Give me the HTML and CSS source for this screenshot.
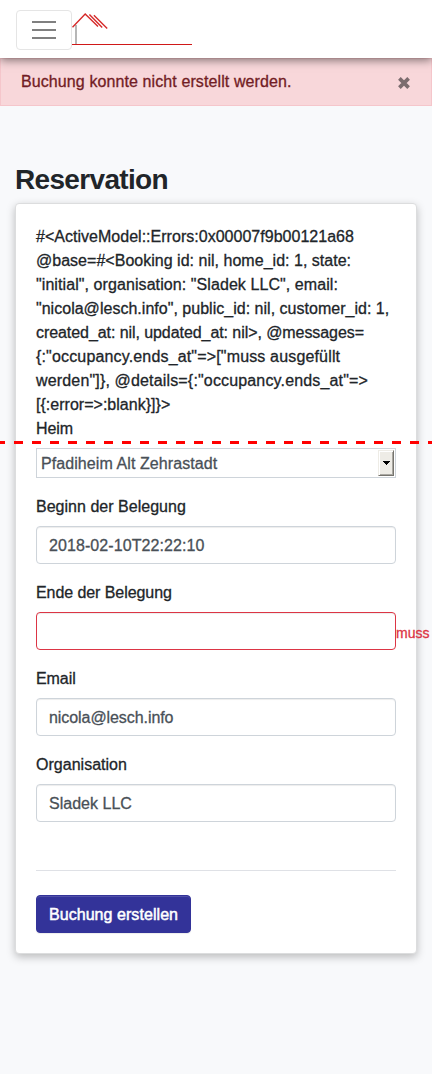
FILE: index.html
```html
<!DOCTYPE html>
<html lang="de">
<head>
<meta charset="utf-8">
<title>Reservation</title>
<link rel="stylesheet" href="styles.css">
</head>
<body>
<header class="navbar">
  <button class="toggler" type="button" aria-label="Navigation">
    <svg width="24" height="19" viewBox="0 0 24 19"><path d="M0 1h24M0 9h24M0 17h24" stroke="#808080" stroke-width="2"/></svg>
  </button>
  <svg class="logo" width="120" height="36" viewBox="0 0 120 36" fill="none">
    <path d="M4 15V34" stroke="#aaa" stroke-width="1.7"/>
    <path d="M.5 17.2L13.2 4L26 16.5M17.4 4.4L30.2 17.6M21.9 5.2L35.2 18.6" stroke="#d62b2b" stroke-width="1.4"/>
    <rect x="0" y="34" width="120" height="1" fill="#d01818"/>
  </svg>
</header>
<div class="alert">
  <span class="alert-text">Buchung konnte nicht erstellt werden.</span>
  <button class="close" type="button" aria-label="Schliessen">
    <svg width="14" height="14" viewBox="0 0 14 14"><path d="M2.4 2.4L11.6 11.6M11.6 2.4L2.4 11.6" stroke="#7b6c6e" stroke-width="3.7"/></svg>
  </button>
</div>
<main>
  <h1>Reservation</h1>
  <form class="card">
    <div class="dump">#&lt;ActiveModel::Errors:0x00007f9b00121a68<br>@base=#&lt;Booking id: nil, home_id: 1, state:<br><span class="wide">"initial", organisation: "Sladek LLC", email:</span><br>"nicola@lesch.info", public_id: nil, customer_id: 1,<br><span class="tight">created_at: nil, updated_at: nil&gt;, @messages=</span><br><span class="wider">{:"occupancy.ends_at"=&gt;["muss ausgefüllt</span><br><span class="wider">werden"]}, @details={:"occupancy.ends_at"=&gt;</span><br>[{:error=&gt;:blank}]}&gt;</div>
    <div class="group">
      <label class="tight">Heim</label>
      <div class="select wide"><span class="select-text">Pfadiheim Alt Zehrastadt</span><span class="arrow"><svg width="7" height="4" viewBox="0 0 7 4" shape-rendering="crispEdges"><path d="M0 0H7V1H6V2H5V3H4V4H3V3H2V2H1V1H0Z"/></svg></span></div>
    </div>
    <div class="group">
      <label>Beginn der Belegung</label>
      <div class="field wide">2018-02-10T22:22:10</div>
    </div>
    <div class="group">
      <label class="tight">Ende der Belegung</label>
      <div class="row"><div class="field invalid"></div><span class="feedback">muss</span></div>
    </div>
    <div class="group">
      <label class="tight">Email</label>
      <div class="field tight">nicola@lesch.info</div>
    </div>
    <div class="group">
      <label>Organisation</label>
      <div class="field">Sladek LLC</div>
    </div>
    <hr>
    <button class="submit" type="button">Buchung erstellen</button>
  </form>
</main>
<div class="fold"></div>
</body>
</html>
```
FILE: styles.css
```css
* { box-sizing: border-box; }
body {
  margin: 0;
  min-height: 1074px;
  position: relative;
  overflow: hidden;
  background: #f8f9fb;
  color: #212529;
  font: 16px/24px "Liberation Sans", Arial, sans-serif;
  letter-spacing: 0.02px;
  -webkit-text-stroke: 0.3px;
}
.navbar {
  position: relative;
  z-index: 1;
  display: flex;
  align-items: flex-start;
  height: 58px;
  padding: 10px 16px;
  background: #fff;
  box-shadow: 0 2px 9px rgba(0, 0, 0, .5);
}
.toggler {
  display: flex;
  align-items: center;
  justify-content: center;
  width: 56px;
  height: 40px;
  padding: 1px 0 0;
  border: 1px solid #e5e5e5;
  border-radius: 4px;
  background: transparent;
}
.logo { display: block; }
.alert {
  display: flex;
  justify-content: space-between;
  height: 48px;
  padding: 11px 20px;
  border: 1px solid #f5c6cb;
  background: #f8d7da;
  color: #721c24;
}
.alert-text { letter-spacing: 0.1px; }
.close { display: flex; padding: 6px 0 0; border: 0; background: none; }
main { padding: 55px 15px 0; }
h1 {
  margin: 0;
  height: 42px;
  padding-top: 1px;
  font-size: 28px;
  line-height: 36px;
  font-weight: 700;
  letter-spacing: -0.67px;
  -webkit-text-stroke: 0;
}
.card {
  padding: 20px;
  border: 1px solid #dcddde;
  border-radius: 4px;
  background: #fff;
  box-shadow: 0 3px 8px rgba(0, 0, 0, .25);
}
.dump { height: 192px; padding-top: 1px; white-space: nowrap; }
.tight { letter-spacing: -0.07px; }
.wide { letter-spacing: 0.08px; }
.wider { letter-spacing: 0.16px; }
.group { margin-bottom: 16px; }
label { display: block; height: 24px; padding-top: 1px; margin-bottom: 8px; }
.select {
  display: flex;
  align-items: center;
  justify-content: space-between;
  height: 30px;
  padding: 1px 1px 1px 4px;
  border: 1px solid #ced4da;
  color: #495057;
}
.select-text { padding-top: 2px; }
.arrow {
  display: flex;
  align-items: center;
  justify-content: center;
  width: 16px;
  height: 26px;
  background: #eeece6;
  border: 1px solid #eeece6;
  border-right-color: #76746e;
  border-bottom-color: #76746e;
  box-shadow: inset 1px 1px #fff, inset -1px -1px #aaa8a2;
}
.field {
  flex: 0 0 360px;
  height: 38px;
  padding: 7px 12px 5px;
  border: 1px solid #ced4da;
  border-radius: 4px;
  background: #fff;
  box-shadow: inset 0 1px 1px rgba(0, 0, 0, .075);
  color: #495057;
}
.row { display: flex; align-items: center; }
.invalid { border-color: #dc3545; }
.feedback {
  margin-right: -36px;
  padding-top: 4px;
  line-height: 16px;
  font-size: 14px;
  color: #dc3545;
}
hr { margin: 48px 0 24px; border: 0; border-top: 1px solid #dfe1e6; }
.submit {
  display: block;
  width: 155px;
  height: 38px;
  padding: 2px 0 0;
  border: 1px solid #333399;
  border-radius: 4px;
  background: #333399;
  box-shadow: inset 0 1px rgba(255, 255, 255, .15), 0 1px 1px rgba(0, 0, 0, .075);
  color: #fff;
  font: inherit;
  letter-spacing: 0.06px;
  -webkit-text-stroke: 0.5px;
}
/* Dashed line across the page, drawn over the form */
.fold {
  position: absolute;
  top: 441px;
  left: 0;
  width: 100%;
  height: 3px;
  background: repeating-linear-gradient(90deg, #f00 0 9px, transparent 9px 18px) -4px 0 / 450px 3px;
}
```
